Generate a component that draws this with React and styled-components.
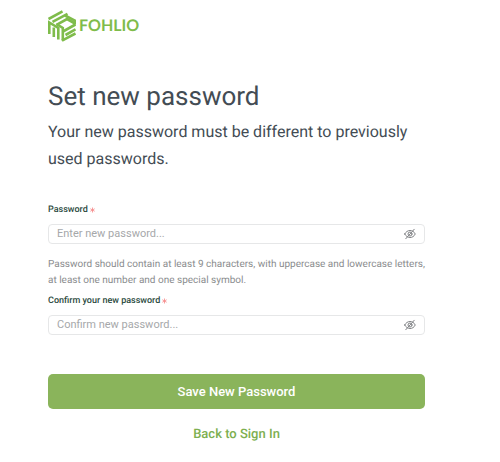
import React, { useState } from 'react';
import styled, { createGlobalStyle } from 'styled-components';

const GlobalStyle = createGlobalStyle`
  * {
    box-sizing: border-box;
  }
  body {
    margin: 0;
    background: #FFFFFF;
    font-family: Roboto, 'Liberation Sans', sans-serif;
    color: #434C54;
    text-rendering: geometricPrecision;
  }
`;

const Page = styled.main`
  display: flex;
  flex-direction: column;
  padding: 10px 75px 16px 48px;
`;

const Brand = styled.a`
  display: flex;
  align-items: center;
  align-self: flex-start;
  gap: 3px;
  color: #7FBC4B;
  text-decoration: none;
`;

const BrandName = styled.span`
  font-family: Lato, sans-serif;
  font-size: 16px;
  font-weight: 700;
  line-height: 32px;
`;

const Title = styled.h1`
  margin: 37px 0 0;
  font-size: 26px;
  font-weight: 400;
  line-height: 36px;
`;

const Subtitle = styled.p`
  margin: 3px 0 29px;
  font-size: 16px;
  line-height: 27px;
`;

const Form = styled.form`
  display: flex;
  flex-direction: column;
`;

const Label = styled.label`
  display: flex;
  align-items: center;
  gap: 2px;
  font-size: 9px;
  font-weight: 500;
  line-height: 18px;
  color: #2B4A40;
`;

const Required = styled.svg`
  width: 5px;
  height: 6px;
  stroke: #F58A8A;
`;

const InputBox = styled.div`
  display: flex;
  align-items: center;
  height: 20px;
  margin-top: 5px;
  padding: 0 8px;
  border: 1px solid #E6E7E8;
  border-radius: 4px;

  &:focus-within {
    border-color: #8AB45B;
  }
`;

const Input = styled.input`
  flex: 1;
  min-width: 0;
  padding: 0;
  border: none;
  outline: none;
  background: transparent;
  font-family: inherit;
  font-size: 11px;
  line-height: 18px;
  color: #434C54;

  &::placeholder {
    color: #A6A8AA;
    opacity: 1;
  }
`;

const EyeButton = styled.button`
  display: flex;
  padding: 0;
  border: none;
  background: none;
  color: ${props => (props.$visible ? '#8AB45B' : '#808285')};
  cursor: pointer;
`;

const Hint = styled.p`
  margin: 13px 0 3px;
  font-size: 10px;
  line-height: 16px;
  color: #8A8C8E;
`;

const SaveButton = styled.button`
  height: 35px;
  margin-top: 39px;
  border: none;
  border-radius: 5px;
  background: #8AB45B;
  font-family: inherit;
  font-size: 13px;
  font-weight: 500;
  color: #FFFFFF;
  cursor: pointer;
`;

const BackLink = styled.a`
  align-self: center;
  margin-top: 17px;
  font-size: 13px;
  font-weight: 500;
  line-height: 18px;
  color: #7DAF50;
  text-decoration: none;
`;

const LogoMark = () => (
  <svg width="28" height="32" viewBox="0 0 28 32" fill="none" stroke="currentColor" strokeWidth="2.6" aria-hidden="true">
    <path d="M0.500 9 L14.500 1.300" />
    <path d="M4.500 11.800 L19.500 3.800" />
    <path d="M8.500 14.800 L19 9 L27.500 13.800" />
    <path d="M17 5.500 L26.700 10.500 V14.500" />
    <path d="M1.300 24 V12.500 L10.300 18 V29.500" />
    <path d="M5.800 17.500 V27" />
    <path d="M8.500 14 L14.800 18 V30.500" />
    <path d="M15 21.500 L27.500 14.500" />
    <path d="M17.500 25 L27.500 19.300" />
    <path d="M14 30.700 L27.500 23.500" />
  </svg>
);

const EyeOff = () => (
  <svg width="12" height="12" viewBox="0 0 24 24" fill="none" stroke="currentColor" strokeWidth="2" strokeLinecap="round" aria-hidden="true">
    <path d="M1.500 12 C6 2.500 18 2.500 22.500 12 C18 21.500 6 21.500 1.500 12 Z" />
    <circle cx="12" cy="12" r="4" />
    <path d="M3.500 21.500 L20.500 2.500" />
  </svg>
);

const PasswordField = ({ id, label, placeholder }) => {
  const [visible, setVisible] = useState(false);

  return (
    <>
      <Label htmlFor={id}>
        {label}
        <Required viewBox="0 0 6 6" aria-hidden="true">
          <path d="M3 0 V6 M0.400 1.500 L5.600 4.500 M0.400 4.500 L5.600 1.500" />
        </Required>
      </Label>
      <InputBox>
        <Input id={id} type={visible ? 'text' : 'password'} placeholder={placeholder} required />
        <EyeButton
          type="button"
          aria-label={visible ? 'Hide password' : 'Show password'}
          $visible={visible}
          onClick={() => setVisible(!visible)}
        >
          <EyeOff />
        </EyeButton>
      </InputBox>
    </>
  );
};

const App = () => (
  <>
    <GlobalStyle />
    <Page>
      <Brand href="/">
        <LogoMark />
        <BrandName>FOHLIO</BrandName>
      </Brand>
      <Title>Set new password</Title>
      <Subtitle>Your new password must be different to previously used passwords.</Subtitle>
      <Form onSubmit={e => e.preventDefault()}>
        <PasswordField id="password" label="Password" placeholder="Enter new password..." />
        <Hint>
          Password should contain at least 9 characters, with uppercase and lowercase letters, at least one
          number and one special symbol.
        </Hint>
        <PasswordField id="confirm" label="Confirm your new password" placeholder="Confirm new password..." />
        <SaveButton type="submit">Save New Password</SaveButton>
      </Form>
      <BackLink href="/sign-in">Back to Sign In</BackLink>
    </Page>
  </>
);

export default App;
